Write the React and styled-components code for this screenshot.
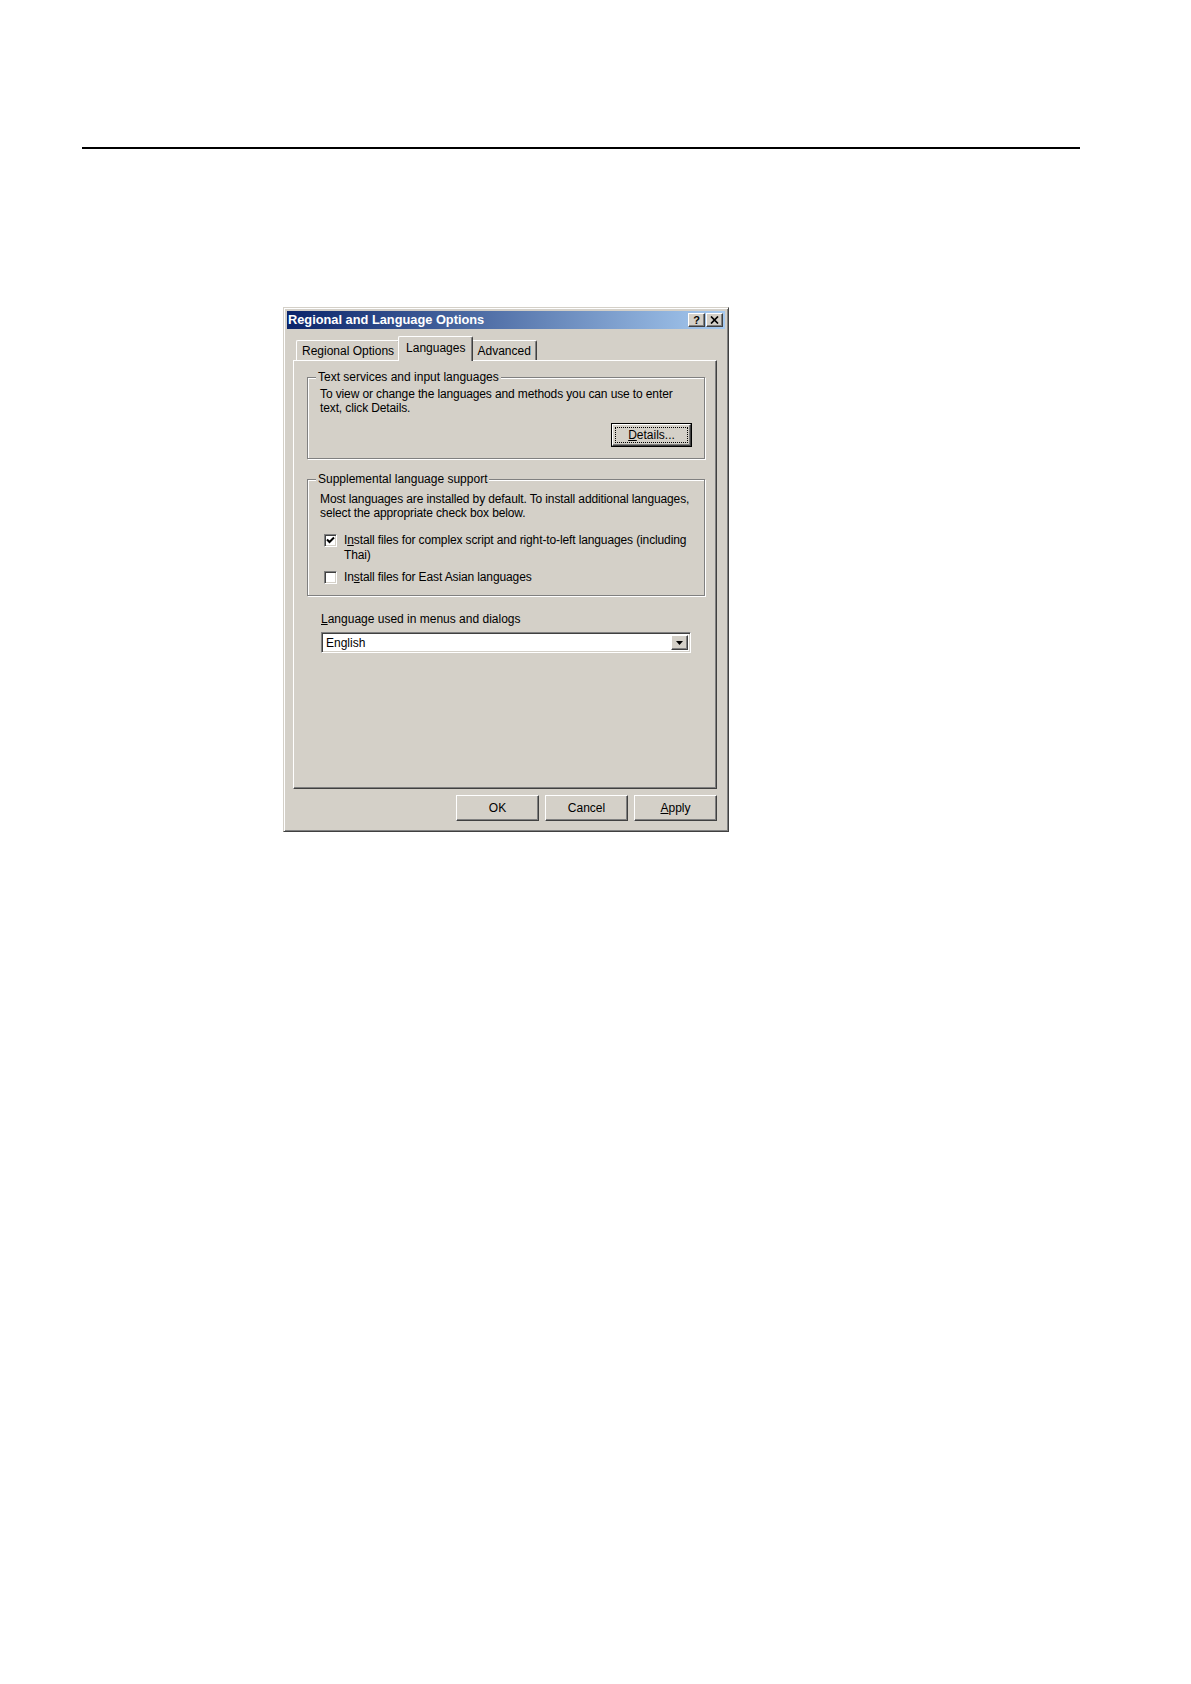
import React from "react"
import styled, { createGlobalStyle } from "styled-components"

const GlobalStyle = createGlobalStyle`
  html, body {
    margin: 0;
    background: #ffffff;
  }
  body {
    font-family: "Liberation Sans", Arial, sans-serif;
    font-size: 12px;
    color: #000000;
  }
`

const Page = styled.div`
  padding-top: 147px;
  min-height: 1684px;
  box-sizing: border-box;
`

const Rule = styled.hr`
  margin: 0 0 0 82px;
  width: 998px;
  height: 0;
  border: 0;
  border-top: 2px solid #000;
`

const Window = styled.div`
  margin: 158px 0 0 283px;
  width: 446px;
  height: 525px;
  box-sizing: border-box;
  padding: 3px;
  background: #d4d0c8;
  border: 1px solid;
  border-color: #d4d0c8 #404040 #404040 #d4d0c8;
  box-shadow: inset 1px 1px #ffffff, inset -1px -1px #808080;
  display: flex;
  flex-direction: column;
`

const TitleBar = styled.div`
  height: 18px;
  display: flex;
  align-items: center;
  padding: 0 2px 0 1px;
  background: linear-gradient(to right, #0a246a, #a6caf0);
`

const Title = styled.div`
  flex: 1;
  color: #ffffff;
  font-weight: bold;
  font-size: 12.8px;
  line-height: 18px;
  white-space: nowrap;
`

const CaptionButtons = styled.div`
  display: flex;
  gap: 1px;
`

const raised = `
  background: #d4d0c8;
  border: 1px solid;
  border-color: #ffffff #404040 #404040 #ffffff;
  box-shadow: inset -1px -1px #808080;
`

const sunken = `
  border: 1px solid;
  border-color: #808080 #ffffff #ffffff #808080;
  box-shadow: inset 1px 1px #404040, inset -1px -1px #d4d0c8;
`

const CaptionButton = styled.div`
  ${raised}
  width: 17px;
  height: 14px;
  box-sizing: border-box;
  display: flex;
  align-items: center;
  justify-content: center;
  font-weight: bold;
  font-size: 11px;
  line-height: 1;
`

const Body = styled.div`
  flex: 1;
  display: flex;
  flex-direction: column;
  padding: 7px 8px 0 6px;
`

const TabRow = styled.div`
  height: 24px;
  display: flex;
  align-items: flex-end;
  padding-left: 3px;
`

const Tab = styled.div`
  position: relative;
  box-sizing: border-box;
  height: ${(p) => (p.$active ? "25px" : "20px")};
  margin: ${(p) => (p.$active ? "0 -2px -1px -2px" : "0")};
  padding: ${(p) => (p.$active ? "0 7px 2px 7px" : "0 5px")};
  z-index: ${(p) => (p.$active ? 2 : 1)};
  background: #d4d0c8;
  border: 1px solid;
  border-bottom: 0;
  border-color: #ffffff #404040 #404040 #ffffff;
  border-radius: 2px 2px 0 0;
  box-shadow: inset -1px 0 #808080;
  display: flex;
  align-items: center;
  white-space: nowrap;
`

const Panel = styled.div`
  height: 429px;
  box-sizing: border-box;
  padding: 9px 11px 0 13px;
  background: #d4d0c8;
  border: 1px solid;
  border-color: #ffffff #404040 #404040 #ffffff;
  box-shadow: inset -1px -1px #808080;
`

const Group = styled.fieldset`
  margin: ${(p) => p.$top || "0"} 0 0 0;
  min-width: 0;
  padding: ${(p) => p.$pad};
  border: 1px solid #808080;
  box-shadow: inset 1px 1px #ffffff, 1px 1px #ffffff;
`

const Legend = styled.legend`
  margin-left: -4px;
  padding: 0 2px;
  line-height: 14px;
  background: #d4d0c8;
`

const Text = styled.p`
  margin: 0;
  line-height: 14px;
  letter-spacing: -0.12px;
  white-space: nowrap;
`

const ButtonRight = styled.div`
  display: flex;
  justify-content: flex-end;
  margin-top: 8px;
`

const DefaultButton = styled.div`
  width: 81px;
  height: 24px;
  box-sizing: border-box;
  border: 1px solid #000;
  display: flex;
`

const ButtonFace = styled.div`
  flex: 1;
  ${raised}
  padding: 2px;
  display: flex;
`

const FocusRing = styled.div`
  flex: 1;
  border: 1px dotted #000;
  display: flex;
  align-items: center;
  justify-content: center;
`

const CheckRow = styled.div`
  display: flex;
  align-items: flex-start;
  gap: 7px;
  padding-left: 4px;
  margin-top: ${(p) => p.$top};
  line-height: 15px;
  letter-spacing: -0.12px;
  white-space: nowrap;
`

const Box = styled.div`
  ${sunken}
  width: 13px;
  height: 13px;
  flex: none;
  box-sizing: border-box;
  margin-top: 1px;
  background: #ffffff;
  display: flex;
  align-items: center;
  justify-content: center;
`

const FieldLabel = styled.div`
  margin: 16px 0 0 14px;
  line-height: 14px;
`

const Combo = styled.div`
  ${sunken}
  margin: 6px 0 0 14px;
  width: 370px;
  height: 21px;
  box-sizing: border-box;
  padding: 2px;
  background: #ffffff;
  display: flex;
  align-items: stretch;
`

const ComboText = styled.div`
  flex: 1;
  padding-left: 2px;
  display: flex;
  align-items: center;
`

const ComboArrow = styled.div`
  ${raised}
  width: 17px;
  box-sizing: border-box;
  display: flex;
  align-items: center;
  justify-content: center;
`

const Footer = styled.div`
  display: flex;
  justify-content: flex-end;
  gap: 6px;
  margin-top: 6px;
`

const Button = styled.div`
  ${raised}
  width: 83px;
  height: 26px;
  box-sizing: border-box;
  display: flex;
  align-items: center;
  justify-content: center;
`

function CloseGlyph() {
  return (
    <svg width="9" height="8" viewBox="0 0 9 8">
      <path d="M1 0.5 L8 7.5 M8 0.5 L1 7.5" stroke="#000" strokeWidth="1.7" />
    </svg>
  )
}

function CheckGlyph() {
  return (
    <svg width="9" height="9" viewBox="0 0 9 9">
      <path d="M1 3.5 L3.5 6 L8 1.5" stroke="#000" strokeWidth="2" fill="none" />
    </svg>
  )
}

function ArrowGlyph() {
  return (
    <svg width="7" height="4" viewBox="0 0 7 4">
      <path d="M0 0 H7 L3.5 4 Z" fill="#000" />
    </svg>
  )
}

export default function App() {
  const tabs = ["Regional Options", "Languages", "Advanced"]

  return (
    <>
      <GlobalStyle />
      <Page>
        <Rule />
        <Window>
          <TitleBar>
            <Title>Regional and Language Options</Title>
            <CaptionButtons>
              <CaptionButton>?</CaptionButton>
              <CaptionButton>
                <CloseGlyph />
              </CaptionButton>
            </CaptionButtons>
          </TitleBar>

          <Body>
            <TabRow>
              {tabs.map((t) => (
                <Tab key={t} $active={t === "Languages"}>
                  {t}
                </Tab>
              ))}
            </TabRow>

            <Panel>
              <Group $pad="3px 12px 11px 12px">
                <Legend>Text services and input languages</Legend>
                <Text>
                  To view or change the languages and methods you can use to enter
                  <br />
                  text, click Details.
                </Text>
                <ButtonRight>
                  <DefaultButton>
                    <ButtonFace>
                      <FocusRing>
                        <span>
                          <u>D</u>etails...
                        </span>
                      </FocusRing>
                    </ButtonFace>
                  </DefaultButton>
                </ButtonRight>
              </Group>

              <Group $top="13px" $pad="6px 12px 10px 12px">
                <Legend>Supplemental language support</Legend>
                <Text>
                  Most languages are installed by default. To install additional languages,
                  <br />
                  select the appropriate check box below.
                </Text>
                <CheckRow $top="13px">
                  <Box>
                    <CheckGlyph />
                  </Box>
                  <span>
                    I<u>n</u>stall files for complex script and right-to-left languages (including
                    <br />
                    Thai)
                  </span>
                </CheckRow>
                <CheckRow $top="7px">
                  <Box />
                  <span>
                    In<u>s</u>tall files for East Asian languages
                  </span>
                </CheckRow>
              </Group>

              <FieldLabel>
                <u>L</u>anguage used in menus and dialogs
              </FieldLabel>
              <Combo>
                <ComboText>English</ComboText>
                <ComboArrow>
                  <ArrowGlyph />
                </ComboArrow>
              </Combo>
            </Panel>

            <Footer>
              <Button>OK</Button>
              <Button>Cancel</Button>
              <Button>
                <span>
                  <u>A</u>pply
                </span>
              </Button>
            </Footer>
          </Body>
        </Window>
      </Page>
    </>
  )
}
